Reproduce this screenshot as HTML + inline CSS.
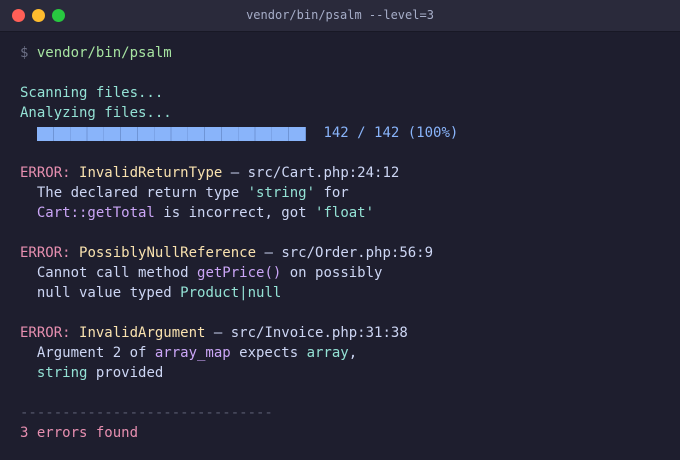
<!DOCTYPE html>
<html><head><style>
html,body{margin:0;padding:0;background:#1e1e2e;}
body{width:680px;height:460px;overflow:hidden;position:relative;font-family:"DejaVu Sans Mono","Liberation Mono",monospace;}
.bar{position:absolute;left:0;top:0;width:680px;height:31px;background:#2a2a3b;border-bottom:1px solid #181825;}
.dot{position:absolute;top:9px;width:13px;height:13px;border-radius:50%;}
.title{position:absolute;top:0;left:0;width:680px;text-align:center;line-height:31px;font-size:12px;color:#a6adc8;}
.t{position:absolute;left:20px;top:43px;font-size:14px;line-height:20px;color:#cdd6f4;white-space:pre;}
.g{color:#a6e3a1}.m{color:#6c7086}.c{color:#94e2d5}.p{color:#e78fb0}.y{color:#f9e2af}.l{color:#cba6f7}.b{color:#89b4fa}.d{color:#585b70}
.pb{position:absolute;left:37px;top:127px;width:269px;height:14px;background:#89b4fa;
background-image:repeating-linear-gradient(90deg,transparent 0,transparent 16px,#6f95d6 16px,#6f95d6 16.8px);}
</style></head><body>
<div class="bar">
<div class="dot" style="left:12px;background:#ff5f57"></div>
<div class="dot" style="left:32px;background:#febc2e"></div>
<div class="dot" style="left:52px;background:#28c840"></div>
<div class="title">vendor/bin/psalm --level=3</div>
</div>
<div class="pb"></div>
<div class="t"><span class="m">$</span> <span class="g">vendor/bin/psalm</span>

<span class="c">Scanning files...</span>
<span class="c">Analyzing files...</span>
                                    <span class="b">142 / 142 (100%)</span>

<span class="p">ERROR:</span> <span class="y">InvalidReturnType</span> — src/Cart.php:24:12
  The declared return type <span class="c">'string'</span> for
  <span class="l">Cart::getTotal</span> is incorrect, got <span class="c">'float'</span>

<span class="p">ERROR:</span> <span class="y">PossiblyNullReference</span> — src/Order.php:56:9
  Cannot call method <span class="l">getPrice()</span> on possibly
  null value typed <span class="c">Product|null</span>

<span class="p">ERROR:</span> <span class="y">InvalidArgument</span> — src/Invoice.php:31:38
  Argument 2 of <span class="l">array_map</span> expects <span class="c">array</span>,
  <span class="c">string</span> provided

<span class="d">------------------------------</span>
<span class="p">3 errors found</span></div>
</body></html>
